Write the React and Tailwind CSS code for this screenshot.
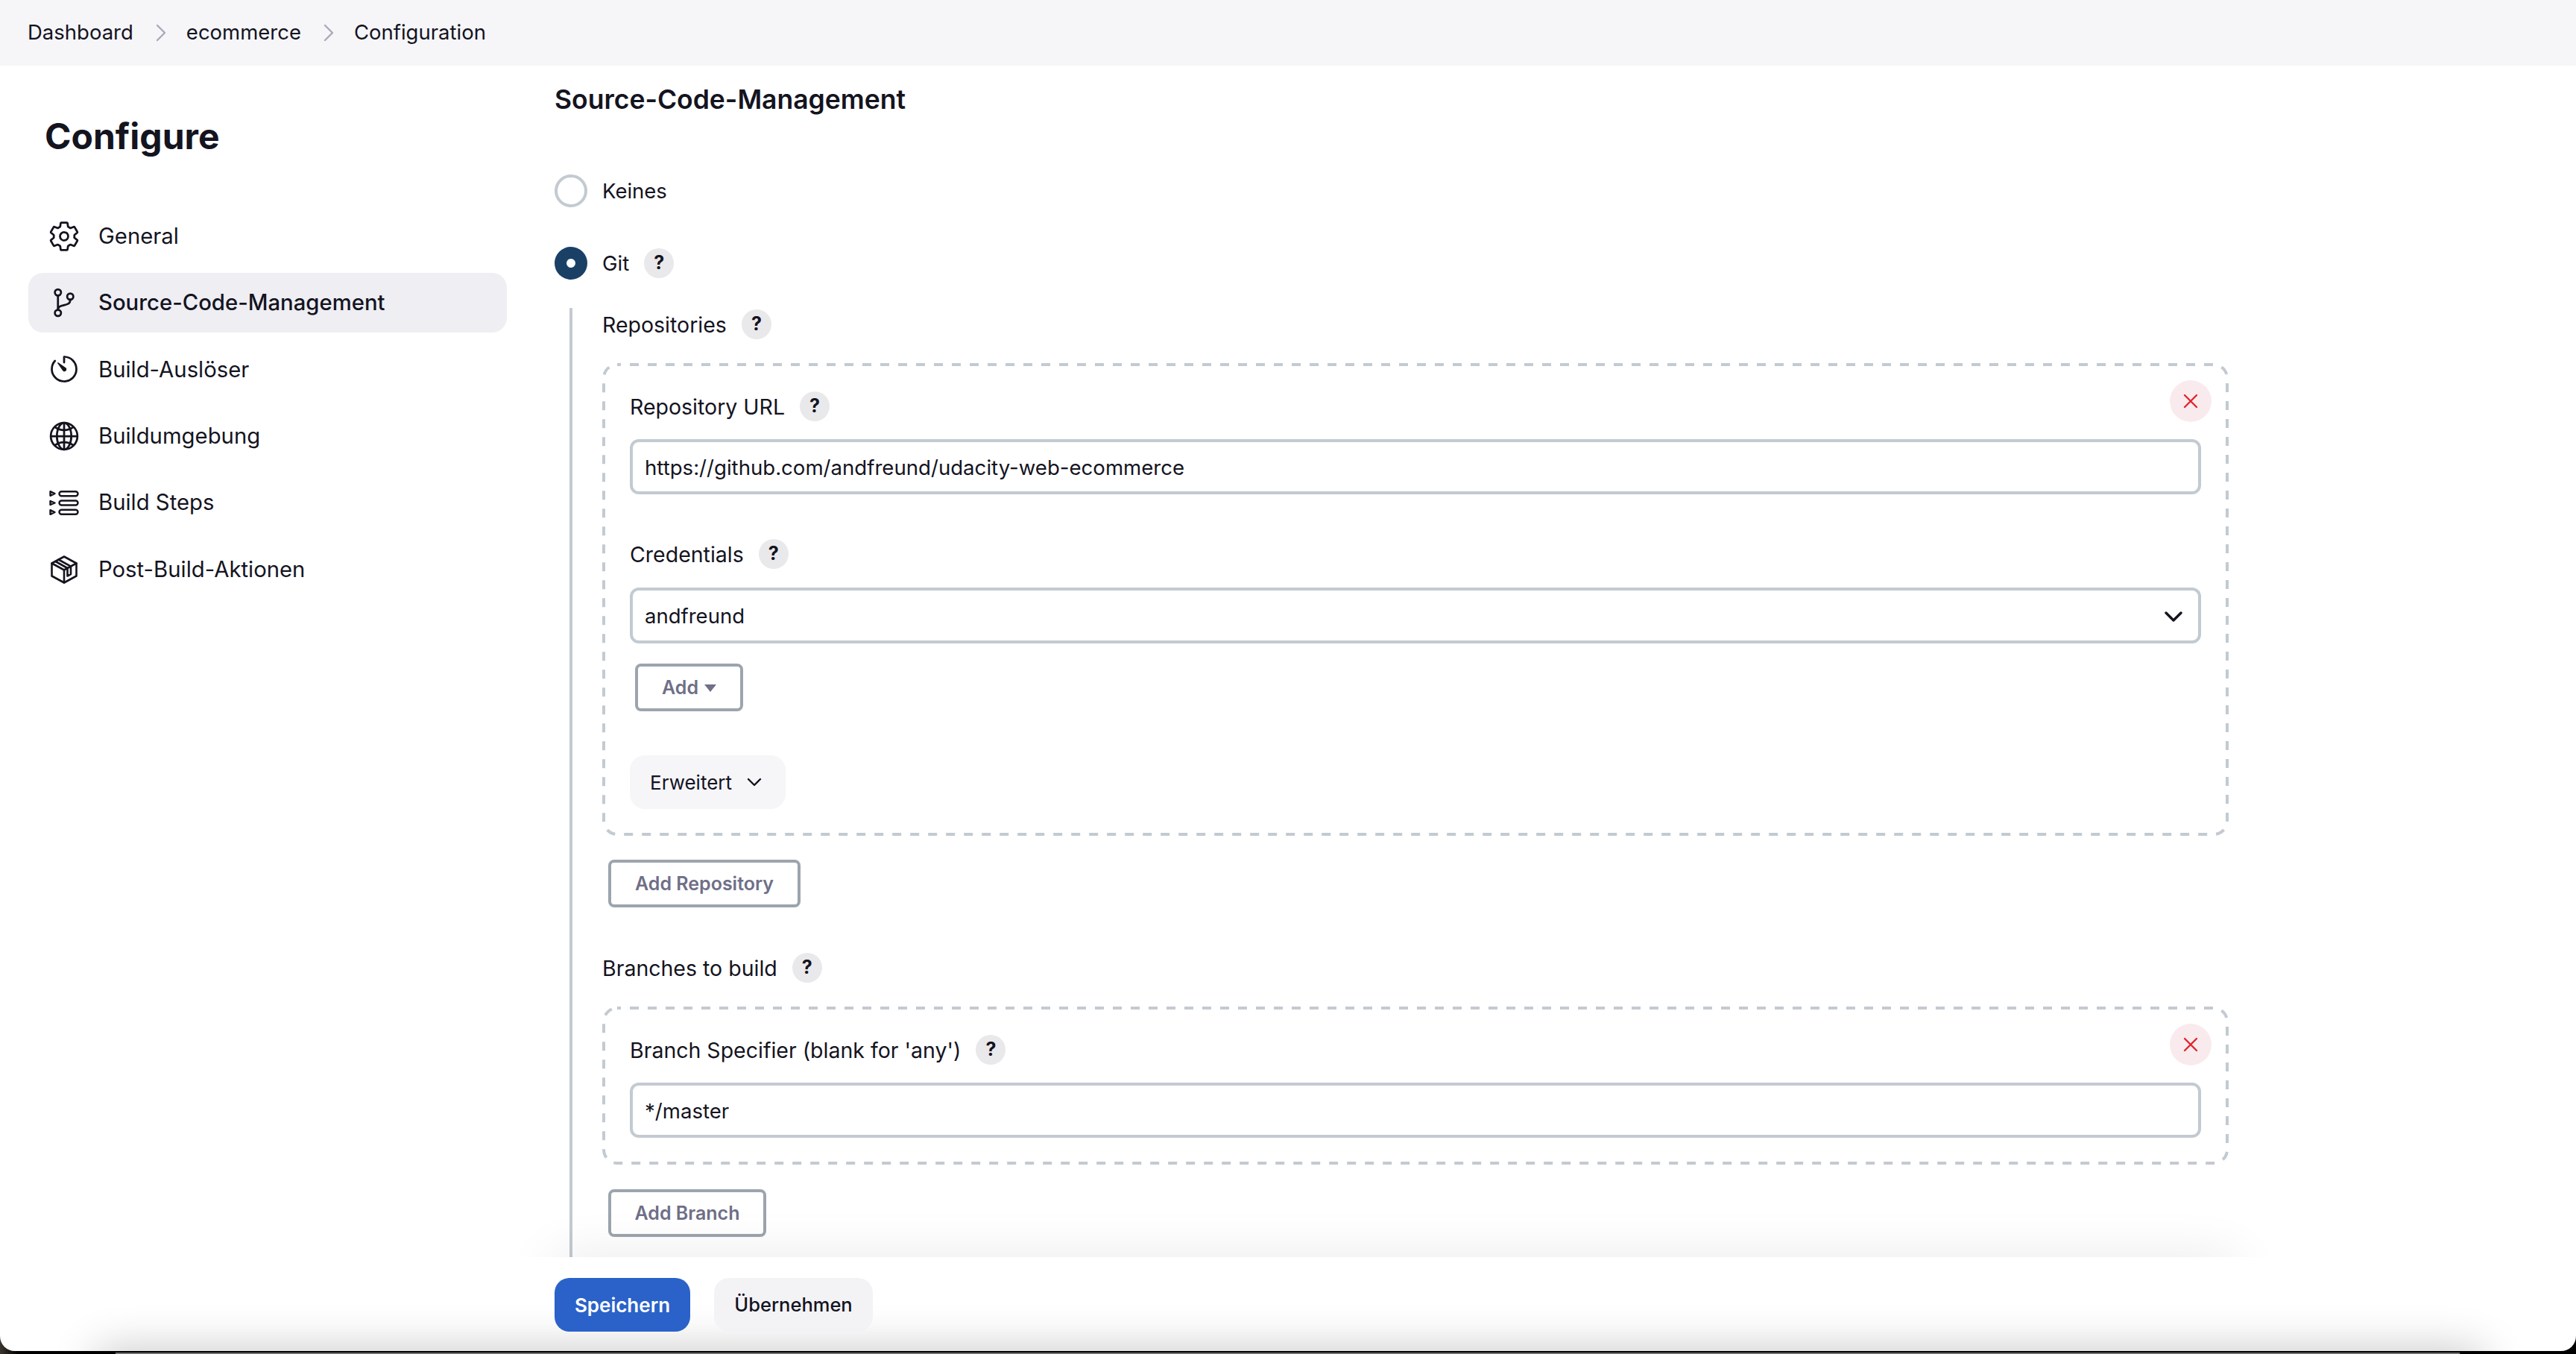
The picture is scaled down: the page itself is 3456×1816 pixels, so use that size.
import { IoSettingsOutline, IoGitBranchOutline, IoTimerOutline, IoGlobeOutline } from 'react-icons/io5'

function StepsIcon() {
  return (
    <svg viewBox="0 0 40 33" className="w-[40px] h-[33px]" fill="none" stroke="currentColor" strokeWidth="2.4" strokeLinejoin="round">
      <path d="M1.5 1.2l6 2.8-6 2.8zM1.5 14l6 2.5-6 2.5zM1.5 26.2l6 2.8-6 2.8z" />
      <rect x="13.5" y="1.2" width="25" height="6" rx="3" />
      <rect x="13.5" y="13.5" width="25" height="6" rx="3" />
      <rect x="13.5" y="25.8" width="25" height="6" rx="3" />
    </svg>
  )
}

function PackageIcon() {
  return (
    <svg viewBox="0 0 36 38" className="w-[36px] h-[38px]" fill="none" stroke="currentColor" strokeWidth="2.6" strokeLinejoin="round" strokeLinecap="round">
      <path d="M18 1.5L34.5 10.5V27.5L18 36.5L1.5 27.5V10.5Z" />
      <path d="M1.5 10.5L18 19.5L34.5 10.5M18 19.5V36.5" />
      <path d="M10.5 5.5L27 14.7V25L22.5 27.5V17L6.5 8" />
    </svg>
  )
}

const nav = [
  { label: 'General', icon: <IoSettingsOutline className="w-[44px] h-[44px]" /> },
  { label: 'Source-Code-Management', icon: <IoGitBranchOutline className="w-[44px] h-[44px]" />, active: true },
  { label: 'Build-Auslöser', icon: <IoTimerOutline className="w-[44px] h-[44px]" /> },
  { label: 'Buildumgebung', icon: <IoGlobeOutline className="w-[44px] h-[44px]" /> },
  { label: 'Build Steps', icon: <StepsIcon /> },
  { label: 'Post-Build-Aktionen', icon: <PackageIcon /> },
]

function Crumb() {
  return (
    <svg viewBox="0 0 14 24" className="w-[14px] h-[24px] text-[#a9a9b8]" fill="none" stroke="currentColor" strokeWidth="2.4" strokeLinecap="round" strokeLinejoin="round">
      <path d="M2 2l10 10L2 22" />
    </svg>
  )
}

function Help() {
  return (
    <span className="w-[40px] h-[40px] rounded-full bg-[#e9e9eb] flex items-center justify-center text-[25px] font-bold text-[#14141f]">?</span>
  )
}

function Label({ children }) {
  return (
    <div className="flex items-center gap-[20px] h-[44px] text-[28.5px]">
      <span className="pt-[2px]">{children}</span>
      <Help />
    </div>
  )
}

function Delete() {
  return (
    <button className="absolute top-[23px] right-[23px] w-[56px] h-[56px] rounded-full bg-[#f9ebed] flex items-center justify-center">
      <svg viewBox="0 0 20 20" className="w-[20px] h-[20px] text-[#e0252f]" fill="none" stroke="currentColor" strokeWidth="2.4" strokeLinecap="round">
        <path d="M2 2l16 16M18 2L2 18" />
      </svg>
    </button>
  )
}

// repeatable block: 12/12 dashes, wider than what border-dashed gives at this size
function DashedBox({ children }) {
  return (
    <div className="relative mt-[30px] px-[37px] py-[36px]">
      <svg className="absolute inset-0 w-full h-full pointer-events-none" fill="none">
        <rect x="2" y="2" rx="18" className="w-[calc(100%-4px)] h-[calc(100%-4px)]" stroke="#c3cad1" strokeWidth="4" strokeDasharray="12 12" strokeDashoffset="7" />
      </svg>
      <Delete />
      {children}
    </div>
  )
}

function Field({ value, className }) {
  return (
    <input
      readOnly
      value={value}
      className={`block w-full h-[74px] border-4 border-[#c3cad1] rounded-[12px] px-[16px] pt-[2px] bg-white outline-none text-[27.6px] text-[#14141f] ${className || ''}`}
    />
  )
}

function OutlineBtn({ children, className }) {
  return (
    <button className={`h-[64px] border-4 border-[#9ca5ae] rounded-[8px] bg-white pt-[2px] text-[25px] font-semibold text-[#6f6f88] flex items-center ${className}`}>
      {children}
    </button>
  )
}

export default function App() {
  return (
    <div className="h-[1816px] w-[3456px] overflow-hidden bg-[linear-gradient(90deg,#3a352e_0,#000_24px)] font-['Inter',sans-serif] text-[27.5px] text-[#14141f]">
      <div className="relative h-[1812px] bg-white rounded-b-[20px] overflow-hidden flex flex-col">
        <header className="h-[88px] shrink-0 bg-[#f6f6f9] flex items-center pl-[37px]">
          <span>Dashboard</span>
          <span className="ml-[30px] mr-[27px]"><Crumb /></span>
          <span>ecommerce</span>
          <span className="ml-[30px] mr-[27px]"><Crumb /></span>
          <span>Configuration</span>
        </header>

        <div className="flex flex-1 min-h-0">
          <aside className="w-[744px] shrink-0 pl-[38px]">
            <h1 className="ml-[22px] mt-[60px] h-[70px] flex items-center text-[48px] font-bold leading-none">Configure</h1>
            <nav className="mt-[59px] w-[642px] flex flex-col gap-[10px] text-[29.3px]">
              {nav.map((n) => (
                <div
                  key={n.label}
                  className={`h-[79.4px] rounded-[20px] flex items-center ${n.active ? 'bg-[#eeeef3] font-medium' : ''}`}
                >
                  <span className="w-[94px] flex items-center justify-center pl-[2px]">{n.icon}</span>
                  <span>{n.label}</span>
                </div>
              ))}
            </nav>
          </aside>

          <main className="flex-1 min-w-0 flex flex-col">
            <div className="flex-1 min-h-0 overflow-hidden">
              <div className="w-[2246px]">
                <h2 className="h-[90px] pt-[2px] flex items-center text-[35.5px] font-semibold">Source-Code-Management</h2>

                <div className="mt-[56px] flex items-center h-[44px]">
                  <span className="w-[44px] h-[44px] rounded-full border-4 border-[#c3cad1]" />
                  <span className="ml-[20px] pt-[2px]">Keines</span>
                </div>
                <div className="mt-[53px] flex items-center h-[44px]">
                  <span className="w-[44px] h-[44px] rounded-full bg-[#1a4066] flex items-center justify-center">
                    <span className="w-[12px] h-[12px] rounded-full bg-white" />
                  </span>
                  <span className="ml-[20px] mr-[20px] pt-[2px]">Git</span>
                  <Help />
                </div>

                <div className="mt-[38px] ml-[20px] border-l-4 border-[#c3cad1] pl-[40px] pb-[60px]">
                  <Label>Repositories</Label>

                  <DashedBox>
                    <Label>Repository URL</Label>
                    <Field value="https://github.com/andfreund/udacity-web-ecommerce" className="mt-[22px]" />
                    <div className="mt-[58px]"><Label>Credentials</Label></div>
                    <div className="mt-[23px] h-[75px] border-4 border-[#c3cad1] rounded-[12px] px-[16px] pt-[2px] flex items-center">
                      <span className="flex-1">andfreund</span>
                      <svg viewBox="0 0 24 14" className="w-[24px] h-[14px] mr-[5px]" fill="none" stroke="currentColor" strokeWidth="3.4" strokeLinecap="round" strokeLinejoin="round">
                        <path d="M2 2l10 10L22 2" />
                      </svg>
                    </div>
                    <OutlineBtn className="mt-[27px] ml-[7px] w-[145px] justify-center gap-[8px]">
                      Add
                      <svg viewBox="0 0 16 10" className="w-[16px] h-[10px]" fill="currentColor">
                        <path d="M0 0h16L8 10z" />
                      </svg>
                    </OutlineBtn>
                    <button className="mt-[59px] h-[72px] w-[209px] rounded-[20px] bg-[#f6f6f9] flex items-center pl-[27px] text-[26px]">
                      Erweitert
                      <svg viewBox="0 0 20 12" className="ml-[20px] w-[20px] h-[12px]" fill="none" stroke="currentColor" strokeWidth="2.4" strokeLinecap="round" strokeLinejoin="round">
                        <path d="M2 2l8 8 8-8" />
                      </svg>
                    </button>
                  </DashedBox>

                  <OutlineBtn className="mt-[32px] ml-[8px] w-[258px] justify-center">Add Repository</OutlineBtn>

                  <div className="mt-[59px]"><Label>Branches to build</Label></div>

                  <DashedBox>
                    <Label>Branch Specifier (blank for 'any')</Label>
                    <Field value="*/master" className="mt-[22px]" />
                  </DashedBox>

                  <OutlineBtn className="mt-[33px] ml-[8px] w-[212px] justify-center">Add Branch</OutlineBtn>
                </div>
              </div>
            </div>

            <div className="h-[126px] shrink-0 relative z-10 flex items-start pt-[28px] gap-[32px]">
              <button className="h-[72px] w-[182px] rounded-[20px] bg-[#2a62c9] text-white font-semibold text-[26px]">Speichern</button>
              <button className="h-[72px] w-[213px] rounded-[20px] bg-[#f2f2f5]/90 pt-[1px] font-medium text-[25.5px]">Übernehmen</button>
            </div>
          </main>
        </div>

        {/* shadow above the bottom bar */}
        <div className="absolute left-0 right-0 bottom-[126px] h-[70px] overflow-hidden pointer-events-none">
          <div className="absolute left-[740px] w-[2260px] top-[70px] h-[60px] shadow-[0_0_70px_rgba(0,0,0,0.09)]" />
        </div>
        {/* shadow at the window's bottom edge */}
        <div className="absolute left-0 right-0 bottom-0 h-[80px] overflow-hidden pointer-events-none">
          <div className="absolute left-[130px] w-[3200px] top-[80px] h-[60px] shadow-[0_0_60px_rgba(0,0,0,0.24)]" />
        </div>
      </div>
      <div className="h-[4px] flex flex-col">
        <div className="h-[2px]" />
        <div className="h-[2px] ml-[155px] mr-[156px] bg-[#6f6f6f]" />
      </div>
    </div>
  )
}
